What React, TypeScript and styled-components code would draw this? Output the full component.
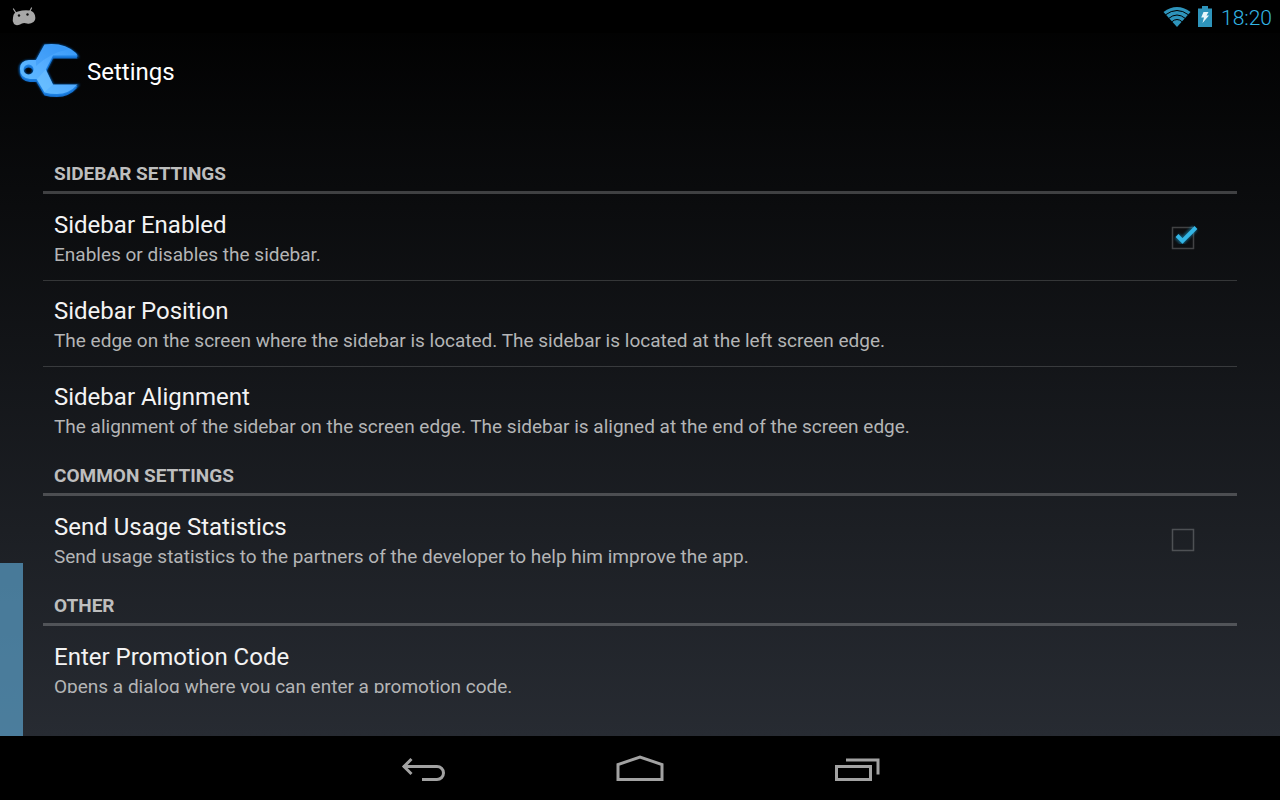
import React, { useState } from "react";
import styled, { createGlobalStyle } from "styled-components";

const GlobalStyle = createGlobalStyle`
  * { box-sizing: border-box; }
  body { margin: 0; background: #000; font-family: Roboto, "Noto Sans", sans-serif; }
`;

const Screen = styled.div`
  display: flex;
  flex-direction: column;
  height: 100vh;
  overflow: hidden;
  color: #f3f3f3;
`;

const Window = styled.div`
  position: relative;
  flex: 1;
  min-height: 0;
  display: flex;
  flex-direction: column;
  background: linear-gradient(#000000, #272b32);
`;

const StatusBar = styled.header`
  display: flex;
  align-items: center;
  justify-content: space-between;
  height: 33px;
  padding: 0 8px 0 12px;
  background: #000;
`;

const StatusIcons = styled.div`
  display: flex;
  align-items: center;
  gap: 7px;
`;

const Clock = styled.time`
  margin-left: 2px;
  padding-top: 2px;
  font-size: 21px;
  line-height: 24px;
  font-weight: 300;
  color: #33b5e5;
`;

const ActionBar = styled.div`
  display: flex;
  align-items: center;
  gap: 4px;
  height: 75px;
  padding: 0 16px;
`;

const PageTitle = styled.h1`
  margin: 0;
  padding-top: 2px;
  font-size: 24px;
  line-height: 28px;
  font-weight: 400;
  color: #fff;
`;

const List = styled.main`
  flex: 1;
  min-height: 0;
  margin: 42px 43px 43px;
  overflow-y: auto;
  scrollbar-width: none;
`;

const SectionTitle = styled.h2`
  display: flex;
  align-items: flex-end;
  height: 44px;
  margin: 0;
  padding: 0 11px 6px;
  border-bottom: 3px solid rgba(255, 255, 255, 0.22);
  font-size: 19px;
  line-height: 22px;
  font-weight: 700;
  color: #bebebe;
`;

const Items = styled.ul`
  margin: 0;
  padding: 0;
  list-style: none;
`;

const Item = styled.li`
  border-top: 1px solid transparent;
  & + & { border-top-color: rgba(255, 255, 255, 0.16); }
`;

const RowButton = styled.button`
  display: block;
  width: 100%;
  height: 85px;
  padding: 2px 11px 0;
  border: 0;
  background: none;
  color: inherit;
  font: inherit;
  text-align: left;
  cursor: pointer;
`;

const RowLabel = styled.label`
  display: flex;
  align-items: center;
  justify-content: space-between;
  height: 85px;
  padding: 0 42px 0 11px;
  cursor: pointer;
`;

const LabelText = styled.span`
  padding-top: 2px;
`;

const ItemTitle = styled.span`
  display: block;
  font-size: 24px;
  line-height: 32px;
`;

const Summary = styled.span`
  display: block;
  font-size: 19px;
  line-height: 28px;
  color: #b4b5b6;
`;

const CheckHolder = styled.span`
  position: relative;
  display: flex;
`;

const CheckBox = styled.input`
  appearance: none;
  width: 32px;
  height: 26px;
  margin: 0;
`;

const CheckArt = styled.svg`
  position: absolute;
  inset: 0;
  overflow: visible;
  pointer-events: none;
`;

const Handle = styled.div`
  position: absolute;
  left: 0;
  bottom: 0;
  width: 23px;
  height: 173px;
  background: rgba(94, 169, 212, 0.66);
`;

const NavBar = styled.nav`
  display: flex;
  justify-content: center;
  align-items: center;
  gap: 89px;
  height: 64px;
  background: #000;
`;

const NavButton = styled.button`
  display: flex;
  justify-content: center;
  align-items: center;
  width: 128px;
  height: 64px;
  padding: 0;
  border: 0;
  background: none;
  cursor: pointer;
`;

const AndroidIcon = () => (
  <svg width="24" height="20" viewBox="0 0 24 20" aria-hidden="true">
    <path d="M1.500 2l2.500 4M19.500 1l-2 4" stroke="#a8a8a8" strokeWidth="1.200" strokeLinecap="round" />
    <path
      d="M1.500 8Q2.500 5 6 4.500Q12 2.500 18 3.500Q22 4.500 23 8.500Q24 13 21.500 15Q18 17.500 15 16.500Q11 15 8 17.500Q4 19 2 17Q0 14 1 10.500Z"
      fill="#a8a8a8"
    />
    <circle cx="7" cy="8.500" r="1.200" fill="#111" />
    <circle cx="15.500" cy="7.500" r="1.200" fill="#111" />
  </svg>
);

const WifiIcon = () => (
  <svg width="28" height="20" viewBox="0 0 28 20" aria-hidden="true">
    <path d="M.5 5Q14-5 27.500 5L14 20Z" fill="#2e94bb" />
    <g fill="none" stroke="#000" strokeWidth="1">
      <path d="M2.500 7.800Q14-.8 25.500 7.800" />
      <path d="M5.500 11.500Q14 4.500 22.500 11.500" />
      <path d="M8.500 15Q14 10 19.500 15" />
    </g>
  </svg>
);

const BatteryIcon = () => (
  <svg width="14" height="21" viewBox="0 0 14 21" aria-hidden="true">
    <path d="M4 0h6v2.500h4V21H0V2.500h4Z" fill="#2e94bb" />
    <path d="M5.500 6h5L8.500 9.500H11L4.500 17L6 11.500H3.200Z" fill="#e8f6fb" />
  </svg>
);

const WrenchIcon = () => (
  <svg width="67" height="60" viewBox="0 0 67 60" aria-hidden="true">
    <defs>
      <linearGradient id="wrench" x1="0" y1="1" x2="1" y2="0">
        <stop offset="0" stopColor="#62c0ff" />
        <stop offset=".5" stopColor="#55adff" />
        <stop offset="1" stopColor="#3598f8" />
      </linearGradient>
      <filter id="glow" x="-20%" y="-20%" width="140%" height="140%">
        <feGaussianBlur stdDeviation="1.300" />
      </filter>
      <path
        id="wrenchShape"
        fillRule="evenodd"
        d="M28.500 3.500Q48 1 60 12L61.500 14.500H37L29.800 28.500L37 43.500H61.500Q53 53 41 53Q34 53 28.500 51.500L20.500 38H14Q4 37 4 27.500Q4 19.500 13 19H20ZM12.500 23.500a5 5 0 1 0 .1 0Z"
      />
    </defs>
    <g filter="url(#glow)" stroke="#0867c8" strokeWidth="2">
      <use href="#wrenchShape" y="1" fill="#0867c8" />
    </g>
    <use href="#wrenchShape" y="3" fill="#1672d2" />
    <use href="#wrenchShape" y="1.500" fill="#1c80e2" />
    <use href="#wrenchShape" fill="url(#wrench)" />
    <path d="M20 19L28.500 3.500Q42 3 53 8Q34 12 20 25Z" fill="#2589ee" opacity=".3" />
    <path d="M21 38L29.800 28.500L37 43.500Q32 48 28.500 51Z" fill="#8bd2ff" opacity=".25" />
  </svg>
);

const navArt = { fill: "none", stroke: "#a2a2a2", strokeWidth: 3 };

type ToggleProps = { title: string; summary: string; initial: boolean };

function ToggleRow({ title, summary, initial }: ToggleProps) {
  const [checked, setChecked] = useState(initial);
  return (
    <Item>
      <RowLabel>
        <LabelText>
          <ItemTitle>{title}</ItemTitle>
          <Summary>{summary}</Summary>
        </LabelText>
        <CheckHolder>
          <CheckBox type="checkbox" checked={checked} onChange={(e) => setChecked(e.target.checked)} />
          <CheckArt width="32" height="26" viewBox="0 0 32 26" aria-hidden="true">
            <rect x="9.500" y="2.500" width="21" height="21" fill="none" stroke="#fff" strokeOpacity=".22" strokeWidth="1.500" />
            {checked && (
              <>
                <path d="M14 11L19 16L32 3" fill="none" stroke="#1e9fd0" strokeWidth="7" opacity=".45" filter="url(#glow)" />
                <path d="M14 10.500L19.500 16L33 2.500" fill="none" stroke="#33b5e5" strokeWidth="4" />
              </>
            )}
          </CheckArt>
        </CheckHolder>
      </RowLabel>
    </Item>
  );
}

function ActionRow({ title, summary }: { title: string; summary: string }) {
  return (
    <Item>
      <RowButton type="button">
        <ItemTitle>{title}</ItemTitle>
        <Summary>{summary}</Summary>
      </RowButton>
    </Item>
  );
}

export default function App() {
  return (
    <Screen>
      <GlobalStyle />
      <Window>
        <StatusBar>
          <AndroidIcon />
          <StatusIcons>
            <WifiIcon />
            <BatteryIcon />
            <Clock>18:20</Clock>
          </StatusIcons>
        </StatusBar>
        <ActionBar>
          <WrenchIcon />
          <PageTitle>Settings</PageTitle>
        </ActionBar>
        <List>
          <SectionTitle>SIDEBAR SETTINGS</SectionTitle>
          <Items>
            <ToggleRow title="Sidebar Enabled" summary="Enables or disables the sidebar." initial={true} />
            <ActionRow
              title="Sidebar Position"
              summary="The edge on the screen where the sidebar is located. The sidebar is located at the left screen edge."
            />
            <ActionRow
              title="Sidebar Alignment"
              summary="The alignment of the sidebar on the screen edge. The sidebar is aligned at the end of the screen edge."
            />
          </Items>
          <SectionTitle>COMMON SETTINGS</SectionTitle>
          <Items>
            <ToggleRow
              title="Send Usage Statistics"
              summary="Send usage statistics to the partners of the developer to help him improve the app."
              initial={false}
            />
          </Items>
          <SectionTitle>OTHER</SectionTitle>
          <Items>
            <ActionRow title="Enter Promotion Code" summary="Opens a dialog where you can enter a promotion code." />
          </Items>
        </List>
        <Handle />
      </Window>
      <NavBar>
        <NavButton type="button" aria-label="Back">
          <svg width="46" height="28" viewBox="0 0 46 28" {...navArt}>
            <path d="M3 12.500H37a6.500 6.500 0 0 1 0 13H22M11.500 5L4 12.500L11.500 20" />
          </svg>
        </NavButton>
        <NavButton type="button" aria-label="Home">
          <svg width="48" height="28" viewBox="0 0 48 28" {...navArt}>
            <path d="M2 25.500V10.500L24 3L46 10.500V25.500Z" />
          </svg>
        </NavButton>
        <NavButton type="button" aria-label="Recent apps">
          <svg width="46" height="28" viewBox="0 0 46 28" {...navArt}>
            <path d="M2.500 12.500H36.500V25.500H2.500ZM12 6H44V20.500" />
          </svg>
        </NavButton>
      </NavBar>
    </Screen>
  );
}
